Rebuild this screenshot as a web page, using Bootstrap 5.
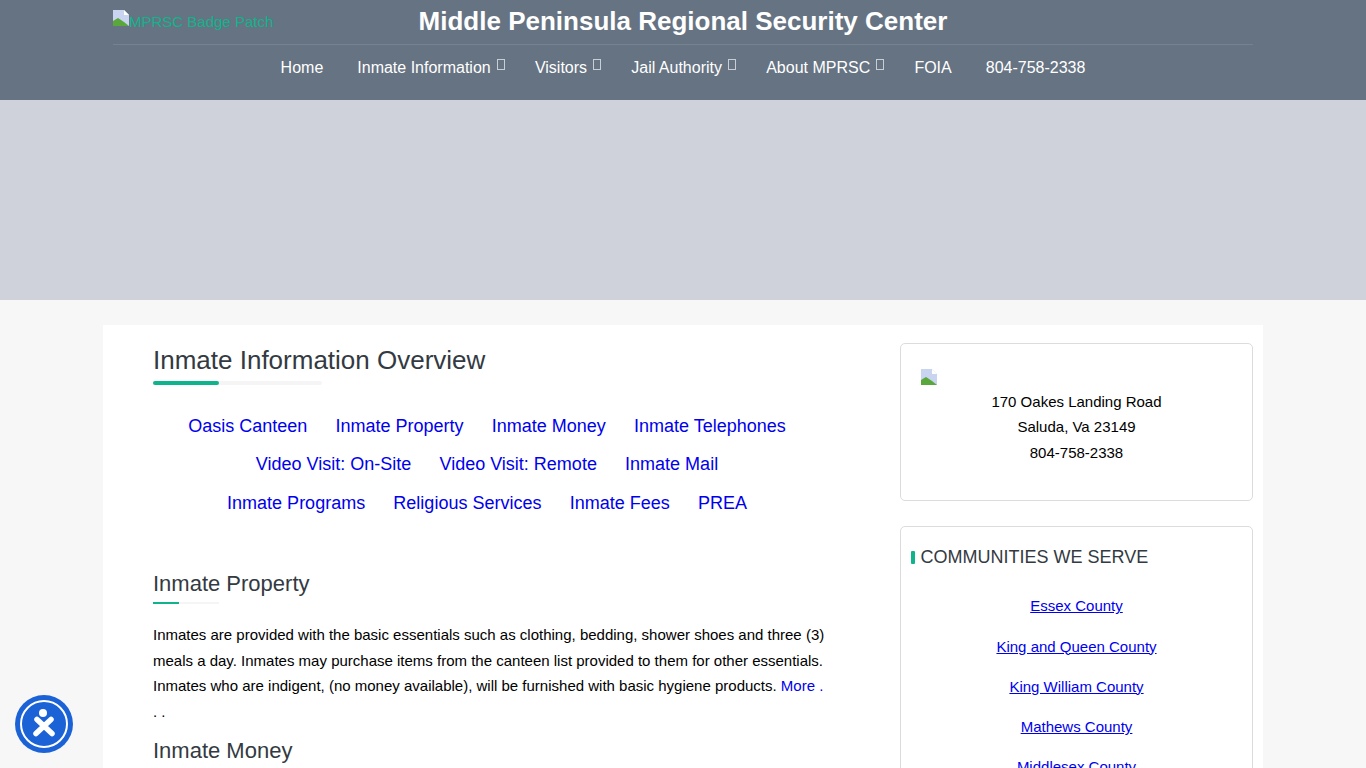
<!DOCTYPE html>
<html lang="en">
<head>
<meta charset="utf-8">
<title>Inmate Information Overview</title>
<link href="https://cdn.jsdelivr.net/npm/bootstrap@5.3.0/dist/css/bootstrap.min.css" rel="stylesheet">
<style>
body{background:#f7f7f7;font-family:"Liberation Sans",Arial,sans-serif;color:#000;font-size:15px}
.site-head{background:#667382;height:100px}
.head-inner{width:1140px;margin:0 auto}
.head-top{height:45px;border-bottom:1px solid #76828f;position:relative}
.logo-alt{color:#10b48c;font-size:15px;line-height:16px;padding-top:10px;position:absolute;left:0;top:0}
.logo-alt svg{vertical-align:1px}
.site-title{font-size:26px;font-weight:700;color:#fff;line-height:42px;margin:0;text-align:center}
.main-nav a{color:#fff;font-size:16px;text-decoration:none;line-height:46px;padding:0 17px;white-space:nowrap}
.main-nav a.has-sub{padding-right:0;margin-right:13.2px}
.tofu{display:inline-block;width:8px;height:11px;border:1px solid #c9ced4;margin-left:6px;vertical-align:3px}
.hero{background:#cfd2da;height:200px}
.page-wrap{width:1160px;margin:25px auto 0;background:#fff;padding-left:50px;padding-right:10px}
.main-col{width:672px;padding-top:19px}
.side-col{width:353px;padding-top:18px}
.title-lg{font-size:26px;font-weight:400;color:#333a42;line-height:32px;margin:0}
.rule-lg{width:169px;height:4px;background:#f5f5f5;border-radius:2px;margin-top:5px}
.rule-lg i{display:block;width:66px;height:4px;background:#10b48c;border-radius:2px}
.quick-links{padding:21.7px 4px 48px 0;text-align:center;font-size:18px;line-height:38.5px}
.quick-links a{color:#0000ee;text-decoration:none;margin:0 11.6px}
.title-md{font-size:22px;font-weight:400;color:#333a42;line-height:28px;margin:0}
.rule-md{width:66px;height:2px;background:#f5f5f5;margin-top:4px}
.rule-md i{display:block;width:26px;height:2px;background:#10b48c}
.body-copy{font-size:15px;line-height:25.5px;margin:18px 0 0}
.body-copy a{color:#0000ee;text-decoration:none}
.dots{font-size:15px;line-height:25.5px;margin:0 0 13px}
.side-box{border:1px solid #dcdcdc;border-radius:5px;background:#fff}
.addr-box{height:158px;padding:25px 20px 0;margin-bottom:25px;text-align:center;font-size:15px;line-height:25.5px}
.addr-box svg{display:block;margin-bottom:3.7px}
.comm-box{padding:17px 10px 0;height:400px}
.comm-title{font-size:18px;font-weight:400;color:#333a42;line-height:26px;margin:0 0 26.3px;display:flex;align-items:center;gap:5.5px}
.comm-title i{display:block;width:4px;height:13px;background:#10b48c;border-radius:1px}
.comm-link{display:block;text-align:center;color:#0000ee;font-size:15px;line-height:20px;margin-bottom:20.25px;text-decoration:underline}
.access-btn{position:fixed;left:15px;bottom:15px;width:58px;height:58px}
</style>
</head>
<body>
<header class="site-head">
  <div class="head-inner">
    <div class="head-top">
      <span class="logo-alt"><svg width="16" height="16" viewBox="0 0 16 16"><path d="M0 0h11l5 5v11H0z" fill="#c8d4f0"/><path d="M11 0l5 5h-5z" fill="#fff"/><path d="M0 16v-5l5-3 6 4 5 4z" fill="#5aa83c"/></svg>MPRSC Badge Patch</span>
      <h1 class="site-title">Middle Peninsula Regional Security Center</h1>
    </div>
    <nav class="main-nav d-flex justify-content-center">
      <a href="#">Home</a>
      <a href="#" class="has-sub">Inmate Information<span class="tofu"></span></a>
      <a href="#" class="has-sub">Visitors<span class="tofu"></span></a>
      <a href="#" class="has-sub">Jail Authority<span class="tofu"></span></a>
      <a href="#" class="has-sub">About MPRSC<span class="tofu"></span></a>
      <a href="#">FOIA</a>
      <a href="#">804-758-2338</a>
    </nav>
  </div>
</header>
<div class="hero"></div>
<div class="page-wrap d-flex justify-content-between">
  <main class="main-col">
    <h2 class="title-lg">Inmate Information Overview</h2>
    <div class="rule-lg"><i></i></div>
    <div class="quick-links">
      <a href="#">Oasis Canteen</a> <a href="#">Inmate Property</a> <a href="#">Inmate Money</a> <a href="#">Inmate Telephones</a><br>
      <a href="#">Video Visit: On-Site</a> <a href="#">Video Visit: Remote</a> <a href="#">Inmate Mail</a><br>
      <a href="#">Inmate Programs</a> <a href="#">Religious Services</a> <a href="#">Inmate Fees</a> <a href="#">PREA</a>
    </div>
    <h3 class="title-md">Inmate Property</h3>
    <div class="rule-md"><i></i></div>
    <p class="body-copy">Inmates are provided with the basic essentials such as clothing, bedding, shower shoes and three (3) meals a day. Inmates may purchase items from the canteen list provided to them for other essentials. Inmates who are indigent, (no money available), will be furnished with basic hygiene products. <a href="#">More .</a></p>
    <p class="dots"><a class="text-decoration-none text-black" href="#">. .</a></p>
    <h3 class="title-md">Inmate Money</h3>
  </main>
  <aside class="side-col">
    <div class="side-box addr-box">
      <svg width="16" height="16" viewBox="0 0 16 16"><path d="M0 0h11l5 5v11H0z" fill="#c8d4f0"/><path d="M11 0l5 5h-5z" fill="#fff"/><path d="M0 16v-5l5-3 6 4 5 4z" fill="#5aa83c"/></svg>
      170 Oakes Landing Road<br>Saluda, Va 23149<br>804-758-2338
    </div>
    <div class="side-box comm-box">
      <h4 class="comm-title"><i></i>COMMUNITIES WE SERVE</h4>
      <a class="comm-link" href="#">Essex County</a>
      <a class="comm-link" href="#">King and Queen County</a>
      <a class="comm-link" href="#">King William County</a>
      <a class="comm-link" href="#">Mathews County</a>
      <a class="comm-link" href="#">Middlesex County</a>
    </div>
  </aside>
</div>
<div class="access-btn">
  <svg width="58" height="58" viewBox="0 0 58 58">
    <circle cx="29" cy="29" r="29" fill="#1a62d6"/>
    <circle cx="29" cy="29" r="23" fill="none" stroke="#fff" stroke-width="2"/>
    <circle cx="28" cy="18" r="4" fill="#fff"/>
    <path d="M22 24.5l15 14M36 24.5L21 38.5" stroke="#fff" stroke-width="5.5" stroke-linecap="round" fill="none"/>
  </svg>
</div>
<script src="https://cdn.jsdelivr.net/npm/bootstrap@5.3.0/dist/js/bootstrap.bundle.min.js"></script>
</body>
</html>
